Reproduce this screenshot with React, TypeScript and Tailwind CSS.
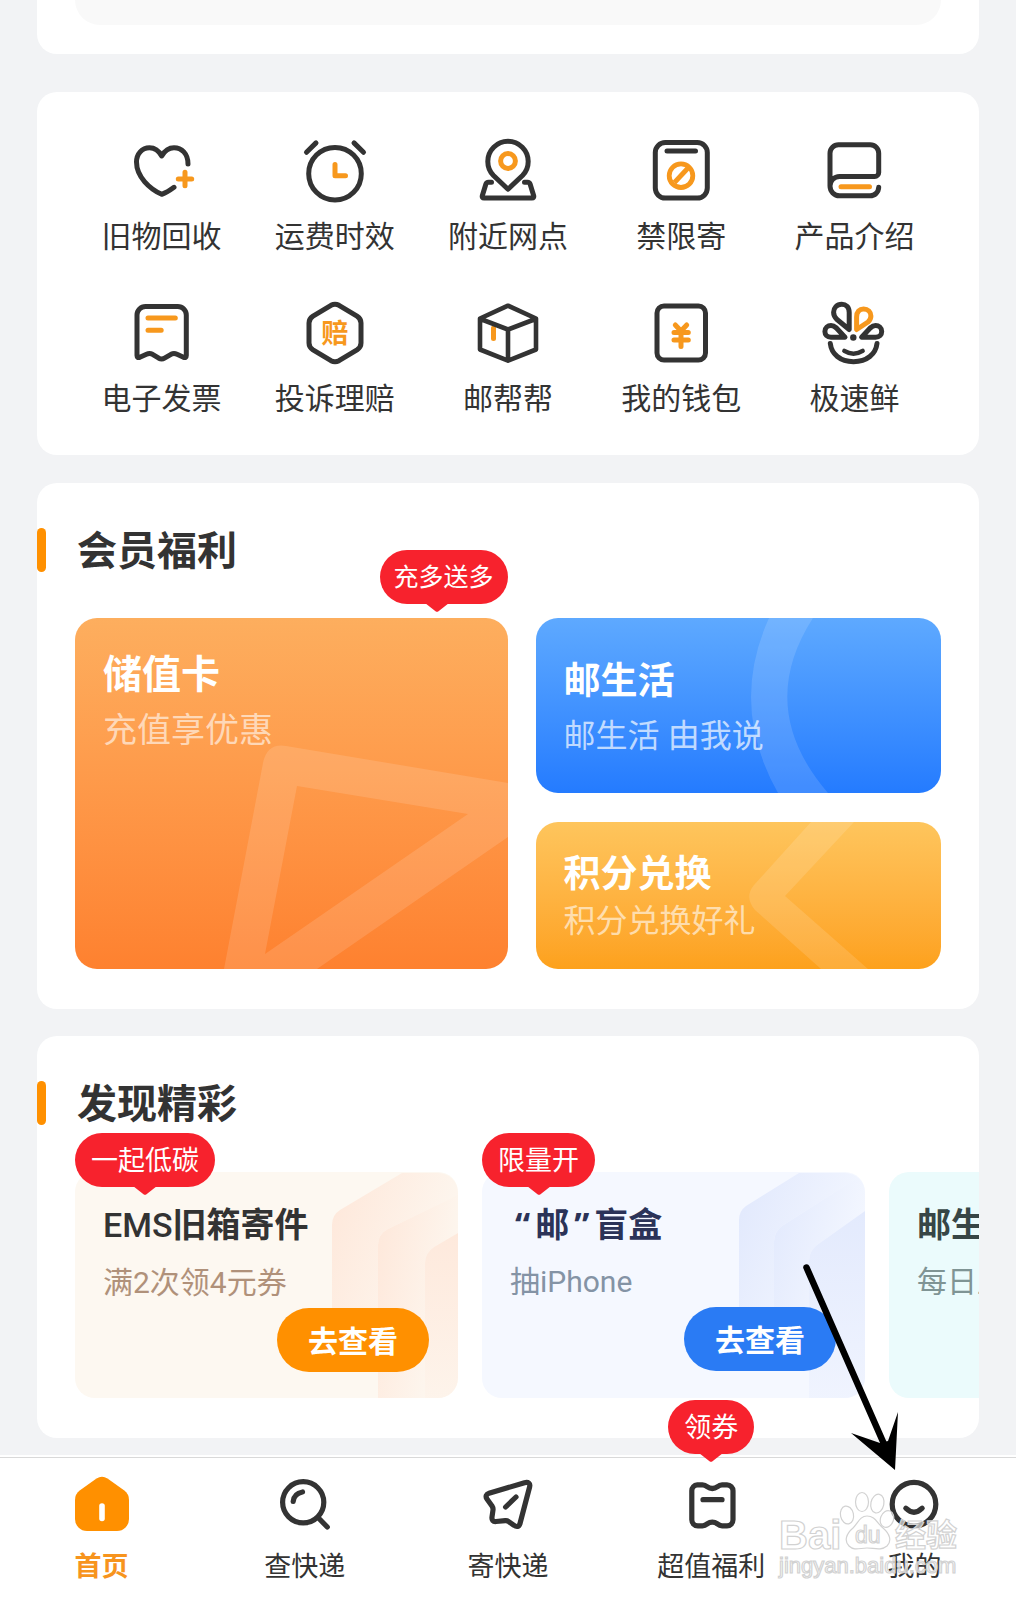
import type { ReactNode } from "react";

const INK = "#333333";
const ORANGE = "#f7981d";

function Glyph({ label, children }: { label: string; children: ReactNode }) {
  return (
    <svg
      viewBox="0 0 72 72"
      className="size-[72px]"
      fill="none"
      stroke={INK}
      strokeWidth="5"
      strokeLinecap="round"
      strokeLinejoin="round"
      role="img"
      aria-label={label}
    >
      {children}
    </svg>
  );
}

const services: { name: string; icon: ReactNode }[] = [
  {
    name: "旧物回收",
    icon: (
      <>
        <path d="M62 28C62 17.5 55.5 11.7 48 11.7C42.5 11.7 38.5 15 35.7 20C33 15 29 11.7 23.5 11.7C16 11.7 10.5 18 10.5 26C10.5 41 24 53 35.7 58.3Q41 56.5 48 51.3" />
        <path d="M59 36.3V49.7M52.3 43H65.7" stroke={ORANGE} />
      </>
    ),
  },
  {
    name: "运费时效",
    icon: (
      <>
        <circle cx="36" cy="37.7" r="26.3" />
        <path d="M7.5 16.3L17 6.9M55 6.9L64.5 16.3" />
        <path d="M36 28.5V39.7H46.5" stroke={ORANGE} />
      </>
    ),
  },
  {
    name: "附近网点",
    icon: (
      <>
        <path d="M36 53.3L21.5 39.5C17.8 35.8 15.8 31 15.8 25.5a20.2 20.2 0 0 1 40.4 0C56.2 31 54.2 35.8 50.5 39.5Z" />
        <circle cx="36" cy="25" r="7.4" stroke={ORANGE} />
        <path d="M19.5 46.2H16.5Q14.5 46.2 13.9 48L10.3 59.8Q9.8 62 12 62H60Q62.2 62 61.7 59.8L58.1 48Q57.5 46.2 55.5 46.2H52.5" />
      </>
    ),
  },
  {
    name: "禁限寄",
    icon: (
      <>
        <rect x="10.3" y="6.6" width="52" height="55.5" rx="10" />
        <path d="M22 15H50.5" />
        <g stroke={ORANGE} strokeWidth="4.8">
          <circle cx="36" cy="39.7" r="11.8" />
          <path d="M29.5 46.5L43 32" strokeLinecap="butt" />
        </g>
      </>
    ),
  },
  {
    name: "产品介绍",
    icon: (
      <>
        <path d="M12 50V17.2a8.5 8.5 0 0 1 8.5-8.5H52.2a8.5 8.5 0 0 1 8.5 8.5V36.5a4 4 0 0 1-4 4H21.5a9.6 9.6 0 0 0-9.5 9.6a9.7 9.7 0 0 0 9.5 9.7H52a8.6 8.6 0 0 0 8.7-8.5" />
        <path d="M23 50.7H51.5" stroke={ORANGE} />
      </>
    ),
  },
  {
    name: "电子发票",
    icon: (
      <>
        <path d="M11 57.5V17a8.5 8.5 0 0 1 8.5-8.5H51.8a8.5 8.5 0 0 1 8.5 8.5V57.5Q60.3 60.3 57.5 59.3L51 56.3Q48 54.9 45 56.3L38.5 60.2Q35.7 61.8 32.8 60.2L26.5 56.3Q23.5 54.9 20.5 56.3L13.8 59.3Q11 60.3 11 57.5Z" />
        <path d="M22 20H49.3M22 32.3H35.2" stroke={ORANGE} />
      </>
    ),
  },
  {
    name: "投诉理赔",
    icon: (
      <>
        <path d="M32 7.3Q36 5.2 40 7.3L58 18.2Q62 20.8 62 25V45Q62 49.2 58 51.8L40 62.7Q36 64.8 32 62.7L14 51.8Q10 49.2 10 45V25Q10 20.8 14 18.2Z" />
        <text
          x="36"
          y="44.5"
          textAnchor="middle"
          fontSize="27"
          fontWeight="700"
          fill={ORANGE}
          stroke="none"
        >
          赔
        </text>
      </>
    ),
  },
  {
    name: "邮帮帮",
    icon: (
      <>
        <path d="M21.5 30V40.5" stroke={ORANGE} />
        <path d="M36 7.7L64 20.5V51.5L36 62.7L8 51.5V20.5ZM8.5 21L36 31.5L63.5 21M36 31.5V62" strokeWidth="4.6" />
      </>
    ),
  },
  {
    name: "我的钱包",
    icon: (
      <>
        <rect x="12" y="8" width="48.5" height="54" rx="7" />
        <path d="M30.3 27L36 33L41.7 27M29 34.5H43.3M29 42H43.3M36 34V48.5" stroke={ORANGE} />
      </>
    ),
  },
  {
    name: "极速鲜",
    icon: (
      <>
        <path d="M31.2 31.5V14.5C31.2 9 27.8 6.2 23.7 6.2C18.8 6.2 15.6 10 15.6 14.3C15.6 17.5 17 19.5 18.7 21.2Z" />
        <path
          d="M38.6 31.5V19C38.6 13.8 41.5 11 45.6 11C50 11 52.9 14.2 52.9 18C52.9 20.8 51.6 22.7 50 24Z"
          stroke={ORANGE}
        />
        <path d="M27 39.2H13C9 39.2 6.9 36.5 6.9 33.5C6.9 29.6 9.8 27.6 13 27.6C15.3 27.6 16.8 28.6 18.4 30Z" />
        <path d="M43.6 39.2H57.6C61.6 39.2 63.7 36.5 63.7 33.5C63.7 29.6 60.8 27.6 57.6 27.6C55.3 27.6 53.8 28.6 52.2 30Z" />
        <circle cx="35.3" cy="39.5" r="3.2" fill={INK} stroke="none" />
        <path d="M12.3 45.5C13.5 56 22 63.7 35.5 63.7C49 63.7 57.8 56 59 45.5" />
        <path d="M26.3 52.8Q35.5 58.5 44.7 52.8" strokeWidth="4.4" />
      </>
    ),
  },
];

function Badge({ text, size = "large" }: { text: string; size?: "small" | "large" }) {
  const small = size === "small";
  return (
    <span
      className={
        "relative flex h-[54px] items-center whitespace-nowrap rounded-full bg-[#f7222d] text-white " +
        (small ? "px-3.5 text-[25px]" : "px-4 text-[27px]")
      }
    >
      {text}
      <svg
        viewBox="0 0 24 10"
        className={"absolute top-[53px] -ml-3 h-[10px] w-6 " + (small ? "left-[45%]" : "left-1/2")}
        aria-hidden="true"
      >
        <path d="M0 0H24L13.5 8.2Q12 9.4 10.5 8.2Z" fill="#f7222d" />
      </svg>
    </span>
  );
}

function SectionTitle({ children }: { children: ReactNode }) {
  return (
    <div className="flex h-[60px] items-center">
      <span className="h-11 w-[9px] rounded-full bg-[#ff9000]" />
      <h2 className="ml-[31px] text-[40px] font-bold leading-[60px] text-[#333]">{children}</h2>
    </div>
  );
}

function PromoCard(props: {
  title: ReactNode;
  note: string;
  badge?: string;
  card: string;
  titleColor: string;
  noteColor: string;
  button?: string;
  decor?: ReactNode;
}) {
  return (
    <article className={"relative w-[383px] shrink-0 rounded-[20px] pb-[26px] pl-7 pr-[29px] pt-[30px] " + props.card}>
      {props.decor}
      {props.badge && (
        <div className="absolute -top-[39px] left-0 z-10">
          <Badge text={props.badge} />
        </div>
      )}
      <h3 className={"relative whitespace-nowrap text-[34px] font-bold leading-[44px] " + props.titleColor}>
        {props.title}
      </h3>
      <p
        className={
          "relative mt-4 whitespace-nowrap font-['Roboto','Noto_Sans_CJK_SC',sans-serif] text-[30px] leading-10 " +
          props.noteColor
        }
      >
        {props.note}
      </p>
      {props.button && (
        <button
          type="button"
          className={
            "relative ml-auto mt-[5px] block h-16 w-[152px] rounded-full text-[30px] font-bold text-white " +
            props.button
          }
        >
          去查看
        </button>
      )}
    </article>
  );
}

function Chevrons({ id, color, paths }: { id: string; color: string; paths: string[] }) {
  return (
    <svg
      viewBox="0 0 383 225"
      className="absolute bottom-0 right-0 h-[225px] w-[383px] rounded-[20px]"
      aria-hidden="true"
    >
      <defs>
        <linearGradient id={id} x1="0" y1="0.3" x2="0.8" y2="0.7">
          <stop offset="0" stopColor={color} />
          <stop offset="1" stopColor={color} stopOpacity="0.1" />
        </linearGradient>
        <linearGradient id={id + "-last"} x1="0" y1="0" x2="0" y2="1">
          <stop offset="0" stopColor={color} />
          <stop offset="1" stopColor={color} stopOpacity="0.3" />
        </linearGradient>
      </defs>
      {paths.map((d, i) => (
        <path key={d} d={d} fill={i === 2 ? `url(#${id}-last)` : `url(#${id})`} />
      ))}
    </svg>
  );
}

const tabs: { name: string; icon: ReactNode }[] = [
  {
    name: "首页",
    icon: (
      <>
        <path
          d="M24.5 4.6Q30 .8 35.5 4.6L52 16.3Q57 20 57 26V45a12 12 0 0 1-12 12H15A12 12 0 0 1 3 45V26Q3 20 8 16.3Z"
          fill="#ff9000"
          stroke="none"
        />
        <path d="M30 32V44.5" stroke="#fff" strokeWidth="5.6" />
      </>
    ),
  },
  {
    name: "查快递",
    icon: (
      <>
        <circle cx="28.2" cy="28.3" r="20.6" />
        <path d="M43.5 44L52.3 53M18.2 27.5Q19 19.5 27.5 18" />
      </>
    ),
  },
  {
    name: "寄快递",
    icon: (
      <>
        <path d="M11 19.3L46.5 8.7C50.5 7.7 52.5 9.5 51.6 13L42 49.5C41 53 38.5 53.2 36 51.3L31 47.8Q29.3 46.5 27.3 46.7L18 47.5C15 47.8 13.6 46 14 43L15 36Q15.3 34 14 32L9 25C7.2 22.5 8.3 20.1 11 19.3Z" />
        <path d="M38 23L27.6 33" />
      </>
    ),
  },
  {
    name: "超值福利",
    icon: (
      <>
        <path d="M16.3 10.8H21.5Q24 10.8 26 12.7Q31.3 16.3 36.6 12.7Q38.6 10.8 41.1 10.8H46a6 6 0 0 1 6 6V45.8a6 6 0 0 1-6 6H41.1Q38.6 51.8 36.6 50Q31.3 46.4 26 50Q24 51.8 21.5 51.8H16.8a6 6 0 0 1-6-6V16.8a6 6 0 0 1 5.5-6Z" />
        <path d="M22 25.7H41" />
      </>
    ),
  },
  {
    name: "我的",
    icon: (
      <>
        <circle cx="30" cy="30.2" r="21.8" />
        <path d="M21.8 34.2Q30 42.2 38.2 34.2" />
      </>
    ),
  },
];

function Pointer() {
  return (
    <svg
      viewBox="0 0 105 215"
      className="pointer-events-none absolute -top-[213px] left-1/2 z-20 -ml-[114px] h-[215px] w-[105px]"
      aria-hidden="true"
    >
      <path d="M6.5 6.5L84 183" stroke="#000" strokeWidth="6.5" strokeLinecap="round" />
      <path d="M95 209L51 172L80 182L88 180L98 151Z" fill="#000" />
    </svg>
  );
}

function Watermark() {
  return (
    <svg
      viewBox="0 0 190 92"
      className="pointer-events-none absolute right-[51px] top-[31px] z-10 h-[92px] w-[190px]"
      fill="#ffffff"
      fillOpacity="0.6"
      stroke="#d2d2d2"
      strokeWidth="1.2"
      role="img"
      aria-label="Baidu 经验"
    >
      <text x="4" y="60" fontSize="40" fontWeight="700" className="font-['Liberation_Sans',sans-serif]">
        Bai
      </text>
      <ellipse cx="72" cy="26" rx="6.5" ry="9" transform="rotate(-12 72 26)" />
      <ellipse cx="87" cy="13" rx="6.5" ry="9.5" />
      <ellipse cx="102.5" cy="14.5" rx="6.5" ry="9.5" transform="rotate(12 102 14)" />
      <ellipse cx="112" cy="30" rx="6.5" ry="8.5" transform="rotate(20 112 30)" />
      <path d="M92 27C100 27 102 34 108 39C115 45 117 52 112 57C106 62 99 59 92 59C85 59 79 62 74 57C69 52 71 45 78 39C83 34 85 27 92 27Z" />
      <text x="80" y="54" fontSize="23" fontWeight="400" className="font-['Liberation_Sans',sans-serif]">
        du
      </text>
      <text x="120" y="57" fontSize="31" fontWeight="700">
        经验
      </text>
      <text x="4" y="84" fontSize="22" className="font-['Liberation_Sans',sans-serif]">
        jingyan.baidu.com
      </text>
    </svg>
  );
}

export default function App() {
  return (
    <div className="overflow-x-hidden bg-[#f2f3f5] font-['Noto_Sans','Noto_Sans_CJK_SC',sans-serif] text-[#333]">
      <main className="flex flex-col px-[37px] pb-[19px]">
        <section className="rounded-b-[20px] bg-white px-[38px] pb-[29px]">
          <div className="h-[25px] rounded-b-[30px] bg-[#f9f9f9]" />
        </section>

        <section className="mt-[38px] rounded-[20px] bg-white px-[38px] pb-[37px] pt-11">
          <ul className="grid grid-cols-5 gap-y-[42px]">
            {services.map((s) => (
              <li key={s.name}>
                <a href="#" className="flex flex-col items-center">
                  <Glyph label={s.name}>{s.icon}</Glyph>
                  <span className="mt-2 whitespace-nowrap text-[30px] leading-10">{s.name}</span>
                </a>
              </li>
            ))}
          </ul>
        </section>

        <section className="mt-7 rounded-[20px] bg-white pb-10 pt-[37px]">
          <SectionTitle>会员福利</SectionTitle>
          <div className="mx-[38px] mt-[38px] grid grid-cols-[432fr_405fr] gap-7">
            <div className="relative">
              <div className="absolute -top-[68px] right-0 z-10">
                <Badge text="充多送多" size="small" />
              </div>
              <a
                href="#"
                className="relative block h-full overflow-hidden rounded-[22px] bg-linear-to-b from-[#fdae5e] to-[#fe812f] px-7 pt-[30px] text-white"
              >
                <svg
                  viewBox="0 0 432 351"
                  className="absolute bottom-0 right-0 h-[351px] w-[432px]"
                  aria-hidden="true"
                >
                  <path
                    fillRule="evenodd"
                    fill="#fff"
                    fillOpacity="0.13"
                    d="M187 145Q191 125 210 128L432 165V219L241 351H148ZM221 168L189 336L392 196Z"
                  />
                </svg>
                <h3 className="relative text-[39px] font-bold leading-[50px]">储值卡</h3>
                <p className="relative mt-2 text-[34px] leading-[46px] text-white/60">充值享优惠</p>
              </a>
            </div>
            <div className="flex flex-col gap-[29px]">
              <a
                href="#"
                className="relative overflow-hidden rounded-[22px] bg-linear-to-b from-[#5ea9ff] to-[#247bff] px-7 pb-[35px] pt-[38px] text-white"
              >
                <svg viewBox="0 0 405 175" className="absolute right-0 top-0 h-[175px] w-[405px]" aria-hidden="true">
                  <path d="M233 0Q193 88 242 175H292Q219 90 277 0Z" fill="#fff" fillOpacity="0.13" />
                </svg>
                <h3 className="relative text-[37px] font-bold leading-[48px]">邮生活</h3>
                <p className="relative mt-2 text-[32px] leading-[46px] text-white/70">邮生活 由我说</p>
              </a>
              <a
                href="#"
                className="relative overflow-hidden rounded-[22px] bg-linear-to-b from-[#fec55c] to-[#fda11b] px-7 pb-[26px] pt-[27px] text-white"
              >
                <svg viewBox="0 0 405 147" className="absolute right-0 top-0 h-[147px] w-[405px]" aria-hidden="true">
                  <path d="M275 0L218 63Q208 75 219 88L285 147H332L249 74L318 0Z" fill="#fff" fillOpacity="0.13" />
                </svg>
                <h3 className="relative text-[37px] font-bold leading-[48px]">积分兑换</h3>
                <p className="relative text-[32px] leading-[46px] text-white/60">积分兑换好礼</p>
              </a>
            </div>
          </div>
        </section>

        <section className="mt-[27px] rounded-[20px] bg-white pb-10 pt-[37px]">
          <SectionTitle>发现精彩</SectionTitle>
          <div className="flex gap-6 overflow-hidden pl-[38px] pt-[39px]">
            <PromoCard
              title={
                <>
                  <span className="font-['Roboto',sans-serif] font-medium">EMS</span>旧箱寄件
                </>
              }
              note="满2次领4元券"
              badge="一起低碳"
              card="bg-[#fdf8f1]"
              titleColor="text-[#333]"
              noteColor="text-[#b0917a]"
              button="bg-[#ff9000]"
              decor={
                <Chevrons
                  id="peach"
                  color="#fee9dc"
                  paths={[
                    "M257 160V52Q257 42 265 37L327 0H383V22L313 56Q303 61 303 72V160Z",
                    "M303 225V72Q303 61 313 56L383 22V60L359 74Q350 80 350 90V225Z",
                    "M350 225V90Q350 80 359 74L383 60V225Z",
                  ]}
                />
              }
            />
            <PromoCard
              title={
                <>
                  <span className="px-[5px]">“</span>邮<span className="px-[5px]">”</span>盲盒
                </>
              }
              note="抽iPhone"
              badge="限量开"
              card="bg-[#f5f8ff]"
              titleColor="text-[#2b3358]"
              noteColor="text-[#8493a5]"
              button="bg-[#2a7bf4]"
              decor={
                <Chevrons
                  id="sky"
                  color="#e3eafd"
                  paths={[
                    "M257 160V47Q257 38 264 33L317 0H383L300 53Q292 59 292 69V160Z",
                    "M292 160V69Q292 59 300 53L383 0V38L335 72Q327 78 327 88V160Z",
                    "M327 225V88Q327 78 335 72L383 38V225Z",
                  ]}
                />
              }
            />
            <PromoCard
              title="邮生活"
              note="每日上新"
              card="bg-[#ebfbfc]"
              titleColor="text-[#374646]"
              noteColor="text-[#7f9494]"
            />
          </div>
        </section>
      </main>

      <nav className="relative border-t border-[#d9d9d9] bg-white pb-[15px] pt-4 shadow-[0_-2px_0_#fff]">
        <ul className="grid grid-cols-5">
          {tabs.map((t, i) => (
            <li key={t.name} className="relative">
              <a href="#" className="flex flex-col items-center">
                <svg
                  viewBox="0 0 60 60"
                  className="size-[60px]"
                  fill="none"
                  stroke={INK}
                  strokeWidth="5.2"
                  strokeLinecap="round"
                  strokeLinejoin="round"
                  aria-hidden="true"
                >
                  {t.icon}
                </svg>
                <span
                  className={
                    "mt-3 whitespace-nowrap text-[27px] leading-10 " + (i === 0 ? "font-semibold text-[#f7941d]" : "")
                  }
                >
                  {t.name}
                </span>
              </a>
              {i === 3 && (
                <div className="absolute inset-x-0 -top-[74px] flex justify-center">
                  <Badge text="领券" />
                </div>
              )}
              {i === 4 && <Pointer />}
            </li>
          ))}
        </ul>
        <Watermark />
      </nav>
    </div>
  );
}
